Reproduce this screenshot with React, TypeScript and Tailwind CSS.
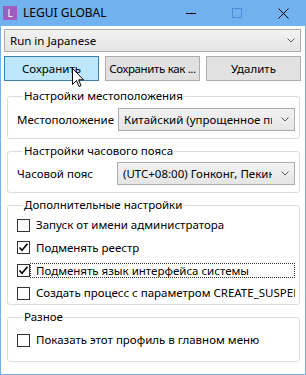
import React from 'react';

const Chevron = () => (
  <svg width="8" height="5" viewBox="0 0 8 5" className="shrink-0">
    <path d="M0.5 0.5 L4 4 L7.5 0.5" fill="none" stroke="#5a5a5a" strokeWidth="1" />
  </svg>
);

function Combo({ text, className }: { text: string; className: string }) {
  return (
    <div
      className={
        'min-w-0 h-[23px] border border-[#acacac] bg-gradient-to-b from-[#f2f2f2] to-[#e5e5e5] flex items-center pl-[5px] pr-[5px] ' +
        className
      }
    >
      <span className="flex-1 min-w-0 overflow-hidden whitespace-nowrap leading-[16px] mr-[9px]">{text}</span>
      <Chevron />
    </div>
  );
}

function Check({ checked }: { checked?: boolean }) {
  return (
    <span className="w-[13px] h-[13px] border border-[#333333] bg-white flex items-center justify-center shrink-0">
      {checked && (
        <svg width="11" height="11" viewBox="0 0 11 11">
          <path d="M1.5 5.5 L4 8.3 L9.5 1.8" fill="none" stroke="#000" strokeWidth="1.6" />
        </svg>
      )}
    </span>
  );
}

function Group({ title, className, children }: { title: string; className: string; children: React.ReactNode }) {
  return (
    <fieldset className={'min-w-0 border border-[#dcdcdc] rounded-[3px] ml-[6px] mr-[5px] ' + className}>
      <legend className="ml-[6px] px-[1px] leading-[16px]">{title}</legend>
      {children}
    </fieldset>
  );
}

export default function App() {
  return (
    <div className="relative w-[306px] h-[375px] overflow-hidden bg-[#70b1ee] flex flex-col text-[11.5px] text-black [font-family:'Noto_Sans',Arial,sans-serif]">
      {/* title bar */}
      <div className="h-[26px] flex items-center shrink-0">
        <div className="ml-[3px] w-[14px] h-[14px] bg-[#a15cc0] flex items-center justify-center text-white text-[10px] leading-none">
          L
        </div>
        <span className="ml-[6px] leading-[16px] text-[12px]">LEGUI GLOBAL</span>
        <div className="flex-1" />
        <div className="w-[46px] h-[26px] flex items-center justify-center">
          <svg width="10" height="10" viewBox="0 0 10 10">
            <path d="M0 5.5 H10" stroke="#000" strokeWidth="1" />
          </svg>
        </div>
        <div className="w-[46px] h-[26px] flex items-center justify-center">
          <svg width="10" height="10" viewBox="0 0 10 10">
            <rect x="0.5" y="0.5" width="9" height="9" fill="none" stroke="#4d8fd6" strokeWidth="1" />
          </svg>
        </div>
        <div className="w-[46px] h-[26px] flex items-center justify-center">
          <svg width="11" height="11" viewBox="0 0 11 11">
            <path d="M0.5 0.5 L10.5 10.5 M10.5 0.5 L0.5 10.5" stroke="#000" strokeWidth="1" />
          </svg>
        </div>
      </div>

      {/* client area */}
      <div className="flex-1 min-h-0 mx-[1px] mb-[1px] bg-white pt-[3px] flex flex-col">
        <Combo text="Run in Japanese" className="ml-[3px] mr-[4px]" />

        <div className="ml-[3px] mr-[4px] mt-[4px] grid grid-cols-3 gap-[6px]">
          <button className="h-[25px] border border-[#3c7fb1] bg-[#bee6fd] leading-[16px]">Сохранить</button>
          <button className="h-[25px] border border-[#adadad] bg-[#e1e1e1] leading-[16px] whitespace-nowrap overflow-hidden tracking-[-0.35px]">
            Сохранить как ...
          </button>
          <button className="h-[25px] border border-[#adadad] bg-[#e1e1e1] leading-[16px]">Удалить</button>
        </div>

        <Group title="Настройки местоположения" className="mt-[7px] pl-[9px] pr-[4px] pt-[4px] pb-[7px]">
          <div className="flex items-center">
            <span className="w-[101px] shrink-0 leading-[16px] whitespace-nowrap">Местоположение</span>
            <Combo text="Китайский (упрощенное письмо, Китай)" className="flex-1" />
          </div>
        </Group>

        <Group title="Настройки часового пояса" className="mt-[4px] pl-[9px] pr-[4px] pt-[3px] pb-[7px]">
          <div className="flex items-center">
            <span className="w-[100px] shrink-0 leading-[16px] whitespace-nowrap">Часовой пояс</span>
            <Combo text="(UTC+08:00) Гонконг, Пекин, Урумчи" className="flex-1" />
          </div>
        </Group>

        <Group title="Дополнительные настройки" className="mt-[4px] pl-[9px] pr-[4px] pt-[1px]">
          <div className="h-[22px] flex items-center">
            <Check />
            <span className="ml-[6px] leading-[16px] whitespace-nowrap">Запуск от имени администратора</span>
          </div>
          <div className="h-[23px] flex items-center">
            <Check checked />
            <span className="ml-[6px] leading-[16px] whitespace-nowrap">Подменять реестр</span>
          </div>
          <div className="h-[23px] flex items-center">
            <Check checked />
            <span className="flex-1 min-w-0 h-[15px] border border-dotted border-[#333333] pl-[5px] leading-[13px] whitespace-nowrap overflow-hidden">
              Подменять язык интерфейса системы
            </span>
          </div>
          <div className="h-[22px] flex items-center">
            <Check />
            <span className="flex-1 min-w-0 ml-[6px] leading-[16px] whitespace-nowrap overflow-hidden">
              Создать процесс с параметром CREATE_SUSPENDED
            </span>
          </div>
        </Group>

        <Group title="Разное" className="mt-[4px] pl-[9px] pr-[4px] pt-[4px] pb-[10px]">
          <div className="h-[22px] flex items-center">
            <Check />
            <span className="ml-[6px] leading-[16px] whitespace-nowrap">Показать этот профиль в главном меню</span>
          </div>
        </Group>
      </div>

      {/* mouse cursor */}
      <svg className="absolute left-[72px] top-[68px]" width="12" height="20" viewBox="0 0 12 20">
        <path
          d="M0.5 0.5 L0.5 16.5 L4.5 12.5 L7 18.5 L9 17.6 L6.6 11.8 L11.5 11.8 Z"
          fill="#fff"
          stroke="#000"
          strokeWidth="1"
        />
      </svg>
    </div>
  );
}
